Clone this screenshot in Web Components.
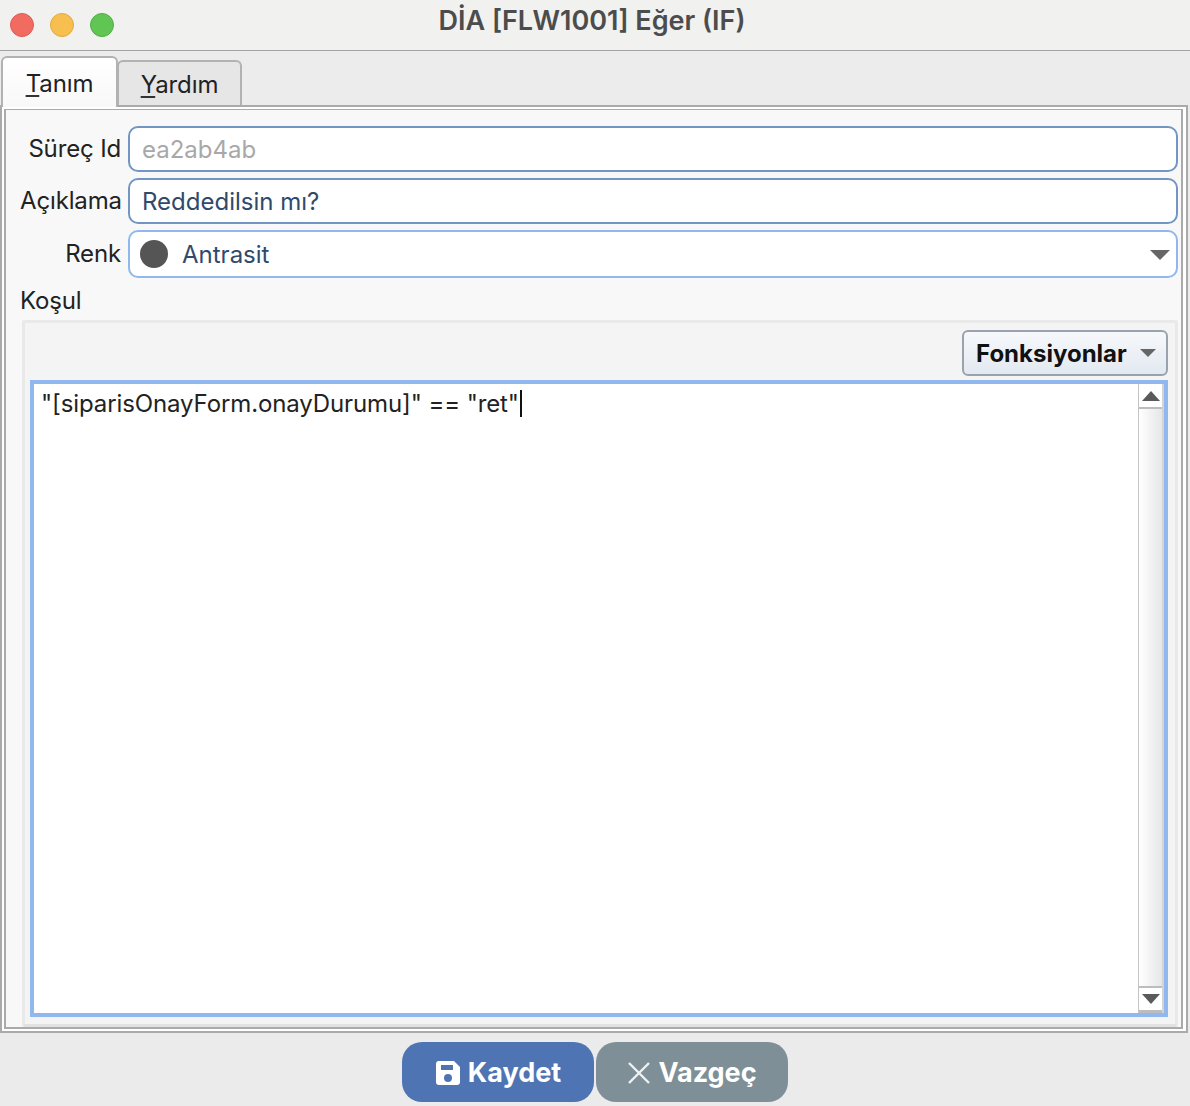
<!DOCTYPE html>
<html><head><meta charset="utf-8">
<style>
html,body{margin:0;padding:0;background:#ebebeb}
body{font-family:Inter,"Liberation Sans",sans-serif;width:1190px;height:1106px;overflow:hidden}
</style></head><body>
<x-window>
  <x-titlebar slot="title">DİA [FLW1001] Eğer (IF)</x-titlebar>
  <x-tabs slot="tabs"></x-tabs>
  <x-panel slot="panel">
    <x-field label="Süreç Id" kind="muted" value="ea2ab4ab"></x-field>
    <x-field label="Açıklama" value="Reddedilsin mı?"></x-field>
    <x-combo label="Renk" value="Antrasit"></x-combo>
    <x-editor label="Koşul" code='"[siparisOnayForm.onayDurumu]" == "ret"'></x-editor>
  </x-panel>
  <x-footer slot="footer"></x-footer>
</x-window>
<script>
function def(name,html){
  customElements.define(name,class extends HTMLElement{
    connectedCallback(){
      if(this.shadowRoot)return;
      const r=this.attachShadow({mode:'open'});
      r.innerHTML=typeof html==='function'?html(this):html;
    }
  });
}
def('x-window',`<style>:host{display:flex;flex-direction:column;width:1190px;height:1106px}</style>
<slot name="title"></slot><slot name="tabs"></slot><slot name="panel"></slot><slot name="footer"></slot>`);
def('x-titlebar',`<style>
:host{display:flex;align-items:center;position:relative;height:50px;flex:none;background:#f1f1f0;border-bottom:1px solid #a3a3a3;box-sizing:content-box}
.l{display:flex;gap:16px;padding-left:10px;flex:none}
.d{width:24px;height:24px;border-radius:50%;box-sizing:border-box;border:1px solid}
.t{position:absolute;left:0;right:0;top:5px;text-align:center;font-size:27px;line-height:32px;font-weight:600;color:#4c4c4c;padding-right:6px}
</style><div class="l"><div class="d" style="background:#f26b60;border-color:#dd5d53"></div><div class="d" style="background:#f7bf4f;border-color:#e2a93e"></div><div class="d" style="background:#61c554;border-color:#52ad46"></div></div><div class="t"><slot></slot></div>`);
def('x-tabs',`<style>
:host{display:flex;align-items:flex-end;height:54px;flex:none;padding-left:1px;box-sizing:border-box;background:#ececec}
.tab{box-sizing:border-box;font-size:24px;color:#222;text-align:center;border:2px solid #b2b2b2;border-bottom:0;border-radius:6px 6px 0 0;letter-spacing:-.1px}
.a{width:117px;background:linear-gradient(#fff,#f8f8f8);padding-top:10px;line-height:32px;position:relative;z-index:1;margin-bottom:-2px;height:51px}
.b{width:125px;height:45px;background:#e6e6e6;padding-top:7px;line-height:32px;margin-left:-1px}
u{text-decoration:underline;text-decoration-thickness:1.5px;text-underline-offset:3px;text-decoration-color:#333}
</style><div class="tab a"><u>T</u>anım</div><div class="tab b"><u>Y</u>ardım</div>`);
def('x-panel',`<style>
:host{display:block;flex:none;height:928px;box-sizing:border-box;border:2px solid #aaa;margin-right:2px;background:#fff;padding:2px 3px 2px 2px}
.in{box-sizing:border-box;height:100%;border:2px solid #aaa;border-top-width:1px;background:#f8f8f8;padding:16px 3px 0 14px;display:flex;flex-direction:column}
</style><div class="in"><slot></slot></div>`);
const rowCss=`
.row{display:flex;align-items:center}
.lb{width:101px;margin-right:7px;text-align:right;font-size:24px;line-height:30px;color:#222;flex:none;white-space:nowrap;letter-spacing:-.15px}
.box{flex:1;box-sizing:border-box;background:#fff;border:2px solid #7395c4;border-radius:10px;display:flex;align-items:center;font-size:24px;color:#2f4a6b;padding-left:12px}`;
def('x-field',h=>`<style>:host{display:block;margin-bottom:6px}${rowCss}.box{height:46px}.muted{color:#a8a8a8}</style>
<div class="row"><div class="lb">${h.getAttribute('label')}</div><div class="box ${h.getAttribute('kind')||''}">${h.getAttribute('value')}</div></div>`);
def('x-combo',h=>`<style>:host{display:block}${rowCss}
.box{height:48px;border-color:#90b8ef;padding-left:10px;position:relative}
.dot{width:28px;height:28px;border-radius:50%;background:#555;margin-right:14px;flex:none}
svg{position:absolute;right:5px;top:17px}</style>
<div class="row"><div class="lb">${h.getAttribute('label')}</div><div class="box"><span class="dot"></span>${h.getAttribute('value')}
<svg width="22" height="12" viewBox="0 0 22 12"><path d="M1 1H21L11 11Z" fill="#666"/></svg></div></div>`);
def('x-scrollbar',`<style>
:host{display:flex;flex-direction:column;width:26px;flex:none;box-sizing:border-box;border-left:1px solid #c4c4c4;border-right:2px solid #d4d4d4;background:linear-gradient(90deg,#fff,#e6e6e6)}
.b{height:23px;flex:none;display:flex;align-items:center;justify-content:center;background:#fff;border-bottom:2px solid #bdbdbd;box-sizing:content-box}
.e{border-top:2px solid #bdbdbd;border-bottom:3px solid #bdbdbd;height:22px}
.m{flex:1}
</style><div class="b"><svg width="18" height="10" viewBox="0 0 18 10"><path d="M9 0L18 10H0Z" fill="#5a5a5a"/></svg></div><div class="m"></div><div class="b e"><svg width="18" height="10" viewBox="0 0 18 10"><path d="M0 0H18L9 10Z" fill="#5a5a5a"/></svg></div>`);
def('x-editor',h=>`<style>
:host{display:flex;flex-direction:column;flex:1;min-height:0}
.lb{font-size:24px;line-height:30px;color:#222;margin-top:8px;height:34px;letter-spacing:-.15px}
.sec{flex:1;min-height:0;box-sizing:border-box;margin:0 0 0 2px;background:#f4f4f4;border:3px solid #e9e9e9;border-bottom-color:#e2e2e2;border-radius:3px;padding:7px 7px 7px 5px;display:flex;flex-direction:column}
.bar{display:flex;justify-content:flex-end;flex:none;height:50px}
.fn{box-sizing:border-box;width:206px;height:46px;border:2px solid #9aa3ad;border-radius:6px;background:linear-gradient(#f6f8fb,#e3e9f1);font-weight:700;font-size:24px;color:#111;display:flex;align-items:center;padding-left:12px;justify-content:space-between;padding-right:9px}
.ta{flex:1;min-height:0;box-sizing:border-box;border:4px solid #90b8ef;background:#fff;display:flex}
.tx{flex:1;font-size:24px;line-height:30px;color:#222;padding:5px 0 0 7px;white-space:pre;letter-spacing:-.11px}
.c{display:inline-block;width:2px;height:27px;background:#111;vertical-align:-5px;margin-left:1px}
</style><div class="lb">${h.getAttribute('label')}</div>
<div class="sec"><div class="bar"><div class="fn">Fonksiyonlar<svg width="18" height="10" viewBox="0 0 18 10"><path d="M1 1H17L9 9Z" fill="#666"/></svg></div></div>
<div class="ta"><div class="tx">${h.getAttribute('code').replace(/&/g,'&amp;').replace(/</g,'&lt;')}<span class="c"></span></div><x-scrollbar></x-scrollbar></div></div>`);
def('x-footer',`<style>
:host{display:flex;justify-content:center;gap:2px;flex:1;padding-top:9px;box-sizing:border-box;background:#ebebeb}
.b{box-sizing:border-box;width:192px;height:60px;padding-top:1px;border-radius:20px;color:#fff;font-weight:700;font-size:27px;display:flex;align-items:center;justify-content:center;gap:7px}
.s{background:#4e74b3}.c{background:#7f8f97}
</style><div class="b s"><svg width="26" height="26" viewBox="0 0 26 26"><path fill-rule="evenodd" fill="#fff" d="M3 1H19L25 7V22A3 3 0 0 1 22 25H4A3 3 0 0 1 1 22V4A3 3 0 0 1 3 1ZM6 5V10H18V5ZM13 14A4 4 0 1 0 13 22A4 4 0 1 0 13 14Z"/></svg>Kaydet</div>
<div class="b c"><svg width="24" height="24" viewBox="0 0 24 24"><path d="M2 2L22 22M22 2L2 22" stroke="#eef1f2" stroke-width="2.4" fill="none"/></svg>Vazgeç</div>`);
</script>
</body></html>
